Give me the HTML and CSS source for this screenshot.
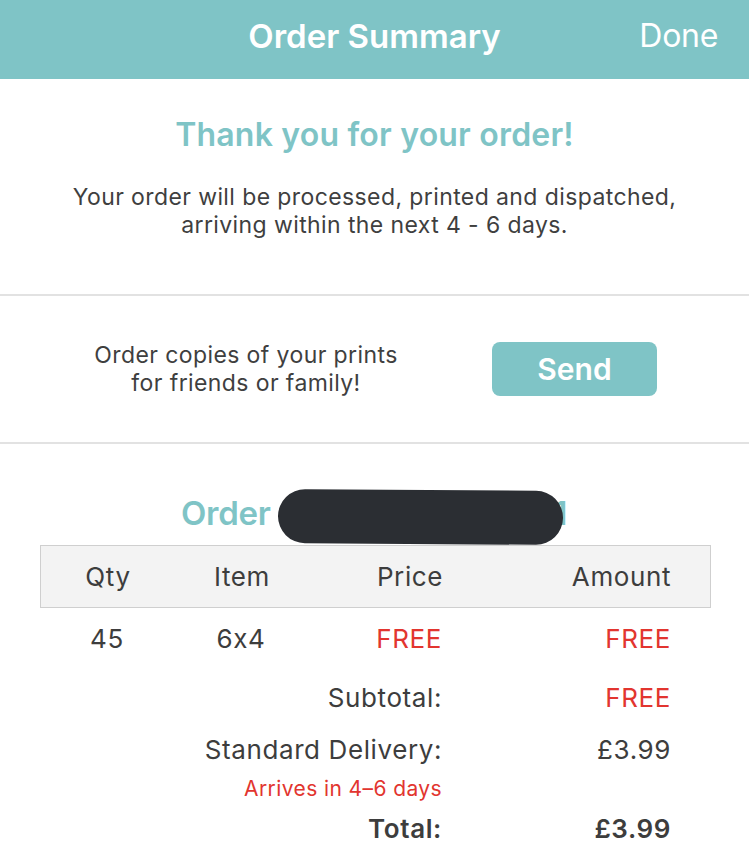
FILE: index.html
```html
<!DOCTYPE html>
<html lang="en">
<head>
<meta charset="utf-8">
<title>Order Summary</title>
<link rel="stylesheet" href="styles.css">
</head>
<body>
<header class="navbar">
  <div class="nav-spacer"></div>
  <h1 class="nav-title">Order Summary</h1>
  <div class="nav-done">Done</div>
</header>

<section class="thanks">
  <h2 class="thanks-title">Thank you for your order!</h2>
  <p class="thanks-text">Your order will be processed, printed and dispatched,<br>arriving within the next 4 - 6 days.</p>
</section>

<section class="share">
  <p class="share-text">Order copies of your prints<br>for friends or family!</p>
  <button class="send-btn">Send</button>
</section>

<section class="order">
  <h2 class="order-title"><span class="order-word">Order</span><span class="redact"></span><span class="tail">1</span></h2>
  <div class="table">
    <div class="thead">
      <div class="c-qty">Qty</div>
      <div class="c-item">Item</div>
      <div class="c-price">Price</div>
      <div class="c-amount">Amount</div>
    </div>
    <div class="trow row-item">
      <div class="c-qty">45</div>
      <div class="c-item">6x4</div>
      <div class="c-price red">FREE</div>
      <div class="c-amount red">FREE</div>
    </div>
    <div class="trow row-sub">
      <div class="c-label">Subtotal:</div>
      <div class="c-amount red">FREE</div>
    </div>
    <div class="trow row-del">
      <div class="c-label">Standard Delivery:</div>
      <div class="c-amount">£3.99</div>
    </div>
    <div class="trow row-arr">
      <div class="c-label red small">Arrives in 4–6 days</div>
    </div>
    <div class="trow row-total">
      <div class="c-label bold">Total:</div>
      <div class="c-amount bold">£3.99</div>
    </div>
  </div>
</section>
</body>
</html>
```
FILE: styles.css
```css
* { box-sizing: border-box; }
html, body { margin: 0; padding: 0; background: #ffffff; }
body {
  width: 749px;
  font-family: "Inter", "Roboto", "Liberation Sans", sans-serif;
  font-feature-settings: "calt" 0;
  color: #3d3d3d;
  overflow: hidden;
}

.navbar {
  height: 79px;
  background: #7fc4c6;
  display: grid;
  grid-template-columns: 1fr auto 1fr;
  align-items: center;
  color: #ffffff;
}
.nav-title {
  margin: 0;
  font-size: 33px;
  font-weight: 600;
  letter-spacing: 0;
  padding-bottom: 8px;
}
.nav-done {
  justify-self: end;
  padding-right: 31px;
  font-size: 32px;
  font-weight: 400;
  letter-spacing: -0.3px;
  padding-bottom: 8px;
}

.thanks {
  text-align: center;
  padding: 38px 0 55px;
  border-bottom: 2px solid #e2e2e2;
  height: 217px;
}
.thanks-title {
  margin: 0;
  font-size: 32px;
  line-height: 36px;
  font-weight: 600;
  color: #7fc4c6;
  letter-spacing: 0.2px;
}
.thanks-text {
  margin: 30px 0 0;
  font-size: 23px;
  line-height: 28px;
  letter-spacing: 0.4px;
  color: #3f3f3f;
}

.share {
  height: 148px;
  display: grid;
  grid-template-columns: 492px 165px;
  align-items: center;
  border-bottom: 2px solid #e2e2e2;
}
.share-text {
  margin: 0;
  text-align: center;
  font-size: 23px;
  line-height: 28px;
  letter-spacing: 0.4px;
  color: #3f3f3f;
}
.send-btn {
  width: 165px;
  height: 54px;
  border: none;
  border-radius: 8px;
  background: #7fc4c6;
  color: #ffffff;
  font-family: inherit;
  font-size: 30px;
  font-weight: 600;
  padding: 0;
}

.order { padding-top: 44px; }
.order-title {
  margin: 0;
  height: 57px;
  padding-left: 181px;
  display: flex;
  align-items: center;
  font-size: 33px;
  font-weight: 600;
  color: #7fc4c6;
  letter-spacing: -0.3px;
}
.order-word { padding-bottom: 8px; }
.redact {
  position: relative;
  z-index: 1;
  display: inline-block;
  width: 285px;
  height: 54px;
  margin-left: 8px;
  border-radius: 27px;
  background: #2b2e33;
  transform: rotate(0.4deg);
}
.tail { margin-left: -10px; padding-bottom: 8px; }

.table { margin: 0 38px 0 40px; }
.thead, .trow {
  display: grid;
  grid-template-columns: 134px 134px 134px 1fr;
  align-items: center;
  font-size: 26px;
  letter-spacing: 0.6px;
  padding-right: 40px;
}
.thead {
  height: 63px;
  background: #f3f3f3;
  border: 1px solid #cfcfcf;
  padding-right: 39px;
}
.c-qty, .c-item { text-align: center; }
.c-price { text-align: right; }
.c-amount { text-align: right; grid-column: 4; }
.c-label { grid-column: 1 / 4; text-align: right; }

.trow > div { padding-bottom: 1px; }
.row-item { height: 62px; }
.row-sub { height: 56px; }
.row-del { height: 48px; }
.row-arr { height: 30px; }
.row-total { height: 50px; }

.red { color: #e2352f; }
.small { font-size: 21px; letter-spacing: 0.4px; }
.bold { font-weight: 600; }
```
